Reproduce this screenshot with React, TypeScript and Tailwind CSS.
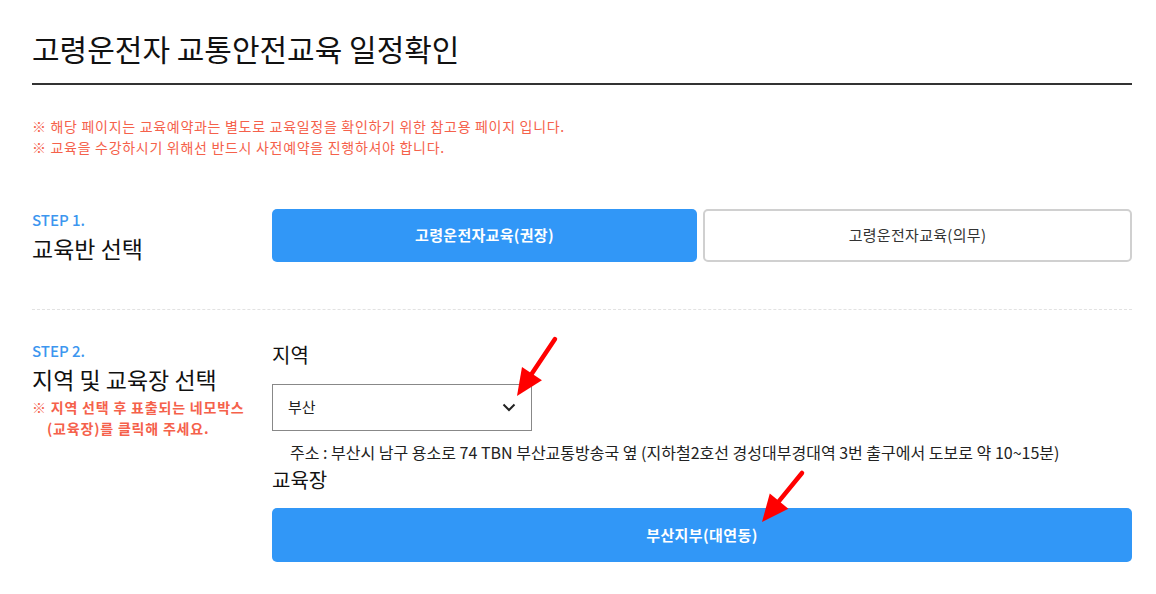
import React from "react";

const font = { fontFamily: '"Noto Sans CJK KR", "Noto Sans", sans-serif' };

function Arrow({ x1, y1, x2, y2 }: { x1: number; y1: number; x2: number; y2: number }) {
  const dx = x2 - x1;
  const dy = y2 - y1;
  const len = Math.sqrt(dx * dx + dy * dy);
  const ux = dx / len;
  const uy = dy / len;
  const hl = 27;
  const hw = 12;
  const bx = x2 - ux * hl;
  const by = y2 - uy * hl;
  const px = -uy;
  const py = ux;
  return (
    <g>
      <line x1={x1} y1={y1} x2={bx + ux * 4} y2={by + uy * 4} stroke="#ff0000" strokeWidth={4.5} strokeLinecap="round" />
      <polygon
        points={`${x2},${y2} ${bx + px * hw},${by + py * hw} ${bx - px * hw},${by - py * hw}`}
        fill="#ff0000"
      />
    </g>
  );
}

export default function App() {
  return (
    <div className="relative w-[1156px] h-[594px] bg-white overflow-hidden" style={font}>
      <div className="mx-[32px] w-[1100px]">
        <h1 className="pt-[28px] pb-[15px] text-[30px] leading-[40px] text-[#111] border-b-2 border-[#333]">
          고령운전자 교통안전교육 일정확인
        </h1>
        <div className="pt-[31px] text-[14px] leading-[21px] tracking-[0.7px] text-[#f5614b]">
          <p>※ 해당 페이지는 교육예약과는 별도로 교육일정을 확인하기 위한 참고용 페이지 입니다.</p>
          <p>※ 교육을 수강하시기 위해선 반드시 사전예약을 진행하셔야 합니다.</p>
        </div>

        <div className="mt-[51px] flex pb-[46px] border-b border-dashed border-[#e2e2e2]">
          <div className="w-[240px] pt-[1px]">
            <div className="text-[15px] leading-[20px] text-[#3c96ef] font-medium">STEP 1.</div>
            <div className="text-[23px] leading-[30px] text-[#111] mt-[3px]">교육반 선택</div>
          </div>
          <div className="flex-1 flex gap-[6px]">
            <button className="flex-1 h-[53px] rounded-[5px] bg-[#3197f7] text-white text-[15px] tracking-[0.3px] font-bold">
              고령운전자교육(권장)
            </button>
            <button className="flex-1 h-[53px] rounded-[5px] border-2 border-[#d0d0d0] bg-white text-[#333] text-[15px] tracking-[0.3px]">
              고령운전자교육(의무)
            </button>
          </div>
        </div>

        <div className="flex pt-[31px]">
          <div className="w-[240px]">
            <div className="text-[15px] leading-[20px] text-[#3c96ef] font-medium">STEP 2.</div>
            <div className="text-[23px] leading-[30px] text-[#111] mt-[3px]">지역 및 교육장 선택</div>
            <div className="text-[14px] leading-[21px] tracking-[0.8px] text-[#f5614b] font-bold mt-[3px]">
              <p>※ 지역 선택 후 표출되는 네모박스</p>
              <p className="pl-[15px]">(교육장)를 클릭해 주세요.</p>
            </div>
          </div>
          <div className="flex-1">
            <div className="text-[20px] leading-[26px] text-[#111] mt-[1px]">지역</div>
            <div className="mt-[16px] w-[260px] h-[47px] border border-[#888] flex items-center justify-between pl-[15px] pr-[15px]">
              <span className="text-[15px] text-[#222]">부산</span>
              <svg width="14" height="9" viewBox="0 0 14 9" fill="none">
                <path d="M1.5 1.5 L7 7 L12.5 1.5" stroke="#222" strokeWidth="2" />
              </svg>
            </div>
            <div className="pl-[18px] mt-[10px] text-[16px] leading-[22px] text-[#222]">
              주소 : 부산시 남구 용소로 74 TBN 부산교통방송국 옆 (지하철2호선 경성대부경대역 3번 출구에서 도보로 약 10~15분)
            </div>
            <div className="text-[20px] leading-[26px] text-[#111] mt-[4px]">교육장</div>
            <button className="mt-[15px] w-full h-[54px] rounded-[5px] bg-[#3197f7] text-white text-[15px] tracking-[0.4px] font-bold">
              부산지부(대연동)
            </button>
          </div>
        </div>
      </div>

      <svg className="absolute left-0 top-0 pointer-events-none" width="1156" height="594">
        <Arrow x1={555} y1={339} x2={517} y2={396} />
        <Arrow x1={802} y1={473} x2={762} y2={522} />
      </svg>
    </div>
  );
}
